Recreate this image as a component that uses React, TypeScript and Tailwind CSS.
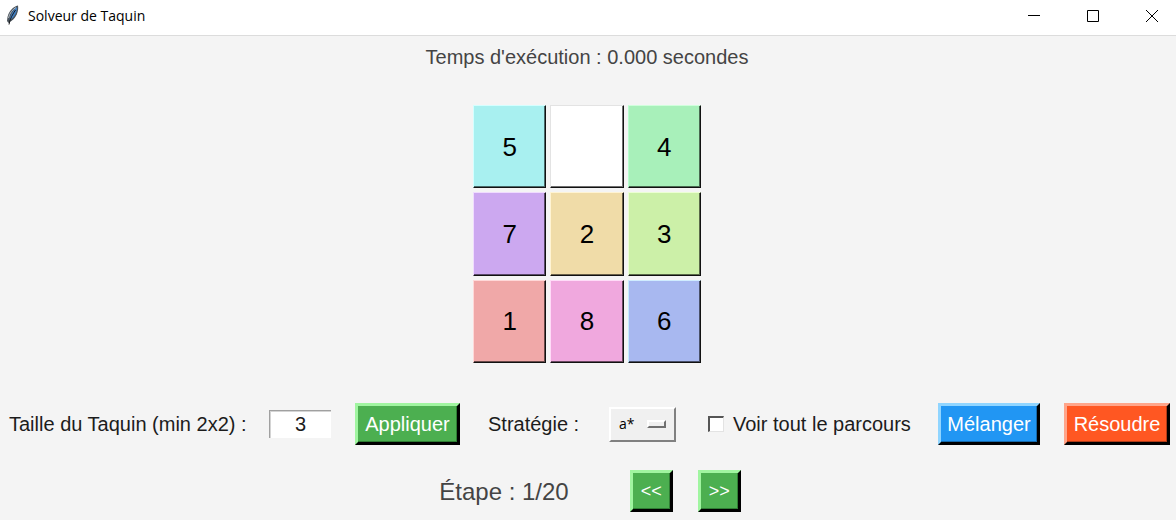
import { useState } from "react";

const tiles = [
  { value: "5", color: "bg-[#a8f0f0]", edge: "border-t-[#d4ffff] border-l-[#d4ffff]" },
  { value: "", color: "bg-white", edge: "border-t-[#e3e3e3] border-l-[#e3e3e3]" },
  { value: "4", color: "bg-[#a8f0ba]", edge: "border-t-[#d0ffdc] border-l-[#b8ffd0]" },
  { value: "7", color: "bg-[#cca8f0]", edge: "border-t-[#f0dcff] border-l-[#f0dcff]" },
  { value: "2", color: "bg-[#f0dca8]", edge: "border-t-[#fff4d4] border-l-[#fff4d4]" },
  { value: "3", color: "bg-[#ccf0a8]", edge: "border-t-[#ecffd4] border-l-[#ecffd4]" },
  { value: "1", color: "bg-[#f0a8a8]", edge: "border-t-[#ffd8d8] border-l-[#ffd8d8]" },
  { value: "8", color: "bg-[#f0a8de]", edge: "border-t-[#ffdcf8] border-l-[#ffdcf8]" },
  { value: "6", color: "bg-[#a8b8f0]", edge: "border-t-[#d0ecff] border-l-[#c4ecff]" },
];

const raised =
  "h-[42px] shrink-0 whitespace-nowrap border-3 border-r-black border-b-black text-xl leading-6 text-white";
const green =
  "border-t-[#a0f5a0] border-l-[#a0f5a0] bg-[#4caf50] shadow-[inset_-1px_-1px_0_#2f7d34]";

function Feather() {
  return (
    <svg viewBox="0 0 16 22" className="h-[22px] w-4" aria-hidden="true">
      <path d="M13 .5C8 1.500 4 6 2.500 12L2 16l1.500 2 3.500-2.500c4-3 7-9 6-15Z" fill="#4a525a" />
      <path d="M12.200 2C9 4 6 8 4.500 15 9 13 12 8 12.200 2Z" fill="#3f7fc4" />
      <path d="M11 2.500C7.500 4.500 4.500 8 3.500 13" fill="none" stroke="#b4bcc4" strokeWidth="1" />
      <path d="M10.500 5C8 9 5 13 4 19.500" fill="none" stroke="#17191c" strokeWidth="1" />
    </svg>
  );
}

function TitleBar() {
  return (
    <header className="flex h-9 items-center border-b border-[#dcdcdc] bg-white pl-[5px]">
      <div className="flex h-8 flex-1 items-center gap-[7px] self-start">
        <Feather />
        <h1 className="font-['Open_Sans',sans-serif] text-sm text-black">Solveur de Taquin</h1>
      </div>
      <div className="flex h-8 gap-[11px] self-start">
        <button aria-label="Réduire" className="grid w-12 place-items-center">
          <svg width="12" height="12" stroke="#000" fill="none"><path d="M0 5.5h12" /></svg>
        </button>
        <button aria-label="Agrandir" className="grid w-12 place-items-center">
          <svg width="12" height="12" stroke="#000" fill="none"><path d="M.5.5h11v11H.5Z" /></svg>
        </button>
        <button aria-label="Fermer" className="grid w-12 place-items-center">
          <svg width="12" height="12" stroke="#000" fill="none"><path d="m0 0 12 12m0-12-12 12" /></svg>
        </button>
      </div>
    </header>
  );
}

export default function App() {
  const [size, setSize] = useState("3");
  const [all, setAll] = useState(false);
  const [strategy, setStrategy] = useState("a*");
  return (
    <div className="flex min-h-screen flex-col bg-[#f4f4f4] font-['Liberation_Sans',Arial,sans-serif] text-[#1c1c1c]">
      <TitleBar />
      <main className="flex flex-1 flex-col">
        <div className="flex flex-col items-center pt-[9px] pr-0.5">
          <p className="text-xl leading-6 text-[#444]">Temps d'exécution : 0.000 secondes</p>
          <div className="mt-9 grid h-[258px] w-[228px] grid-cols-3 grid-rows-3 gap-1">
            {tiles.map((t) => (
              <button
                key={t.value}
                aria-label={t.value || "Case vide"}
                className={`border border-r-[#111] border-b-[#111] text-[26px] leading-8 text-black shadow-[inset_-1px_-1px_0_#00000090] ${t.color} ${t.edge}`}
              >
                {t.value}
              </button>
            ))}
          </div>
        </div>

        <div className="mt-10 grid grid-cols-[260fr_86fr_133fr_121fr_99fr_230fr_126fr_106fr] items-center justify-items-start pr-[6px] pl-[9px] text-xl leading-6 whitespace-nowrap">
          <label htmlFor="size">Taille du Taquin (min 2x2) :</label>
          <input
            id="size"
            value={size}
            onChange={(e) => setSize(e.target.value)}
            className="h-7 w-[62px] border-t border-l border-[#a0a0a0] bg-white text-center shadow-[inset_1px_1px_0_#d4d4d4] outline-none"
          />
          <button className={`w-[105px] ${raised} ${green}`}>Appliquer</button>
          <label htmlFor="strategy">Stratégie :</label>
          <div className="relative">
            <select
              id="strategy"
              value={strategy}
              onChange={(e) => setStrategy(e.target.value)}
              className="block h-[35px] w-[67px] appearance-none border-2 border-t-white border-r-[#808080] border-b-[#808080] border-l-white bg-[#f0f0f0] pl-2 font-['Open_Sans',sans-serif] text-sm text-black outline-none"
            >
              <option>a*</option>
            </select>
            <span className="pointer-events-none absolute top-[13px] right-[10px] h-2 w-[19px] border-2 border-t-white border-r-[#707070] border-b-[#707070] border-l-white bg-[#f0f0f0]" />
          </div>
          <label className="flex items-center gap-[9px]">
            <input
              type="checkbox"
              checked={all}
              onChange={(e) => setAll(e.target.checked)}
              className="size-4 appearance-none border-t-2 border-r border-b border-l-2 border-t-[#555] border-r-[#e3e3e3] border-b-[#e3e3e3] border-l-[#555] bg-white checked:bg-[#444]"
            />
            Voir tout le parcours
          </label>
          <button
            className={`w-[102px] border-t-[#90d5ff] border-l-[#90d5ff] bg-[#2196f3] shadow-[inset_-1px_-1px_0_#1769aa] ${raised}`}
          >
            Mélanger
          </button>
          <button
            className={`w-[106px] border-t-[#ffa58a] border-l-[#ffa58a] bg-[#ff5722] shadow-[inset_-1px_-1px_0_#b03c18] ${raised}`}
          >
            Résoudre
          </button>
        </div>

        <div className="mt-[25px] flex items-center justify-center pb-[7px] pl-1">
          <p className="mr-[61px] pt-0.5 text-2xl leading-7 text-[#444]">Étape : 1/20</p>
          <button aria-label="Étape précédente" className={`mr-[25px] w-[43px] ${raised} ${green}`}>
            <span className="text-lg">&lt;&lt;</span>
          </button>
          <button aria-label="Étape suivante" className={`w-[43px] ${raised} ${green}`}>
            <span className="text-lg">&gt;&gt;</span>
          </button>
        </div>
      </main>
    </div>
  );
}
